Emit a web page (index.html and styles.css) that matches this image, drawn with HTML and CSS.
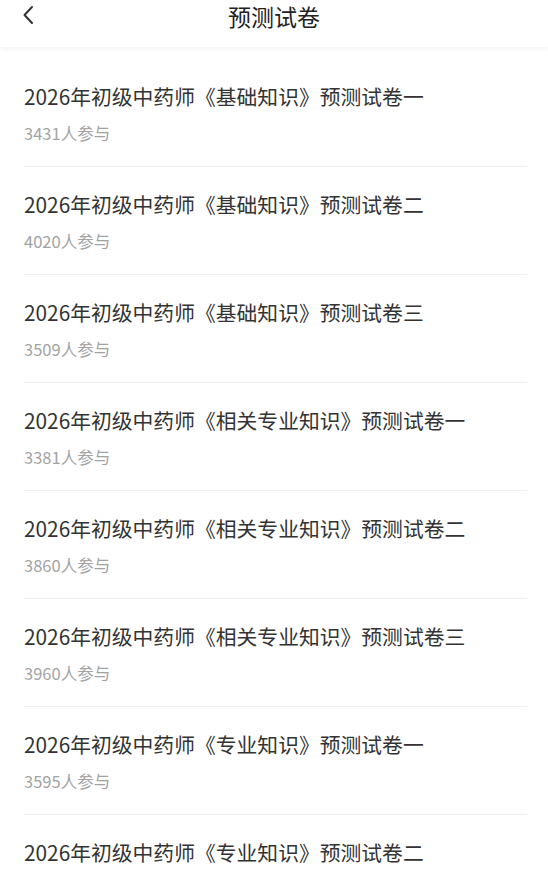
FILE: index.html
```html
<!DOCTYPE html>
<html lang="zh-CN">
<head>
<meta charset="utf-8">
<title>预测试卷</title>
<link rel="stylesheet" href="styles.css">
</head>
<body>
<header class="topbar">
  <span class="back" aria-label="返回">
    <svg width="12" height="20" viewBox="0 0 12 20"><path d="M10 2 L2.5 10 L10 18" fill="none" stroke="#333" stroke-width="2" stroke-linecap="round" stroke-linejoin="round"/></svg>
  </span>
  <h1 class="title">预测试卷</h1>
</header>
<ul class="list">
  <li class="item"><div class="name">2026年初级中药师《基础知识》预测试卷一</div><div class="meta">3431人参与</div></li>
  <li class="item"><div class="name">2026年初级中药师《基础知识》预测试卷二</div><div class="meta">4020人参与</div></li>
  <li class="item"><div class="name">2026年初级中药师《基础知识》预测试卷三</div><div class="meta">3509人参与</div></li>
  <li class="item"><div class="name">2026年初级中药师《相关专业知识》预测试卷一</div><div class="meta">3381人参与</div></li>
  <li class="item"><div class="name">2026年初级中药师《相关专业知识》预测试卷二</div><div class="meta">3860人参与</div></li>
  <li class="item"><div class="name">2026年初级中药师《相关专业知识》预测试卷三</div><div class="meta">3960人参与</div></li>
  <li class="item"><div class="name">2026年初级中药师《专业知识》预测试卷一</div><div class="meta">3595人参与</div></li>
  <li class="item"><div class="name">2026年初级中药师《专业知识》预测试卷二</div></li>
</ul>
</body>
</html>
```
FILE: styles.css
```css
* { box-sizing: border-box; }
html, body {
  margin: 0;
  padding: 0;
  background: #fff;
  font-family: "Noto Sans CJK SC", "Noto Sans", sans-serif;
}
body { overflow: hidden; height: 870px; }
.topbar {
  position: relative;
  height: 47px;
  padding-top: 1px;
  background: #fff;
  display: flex;
  justify-content: center;
  align-items: flex-start;
  box-shadow: 0 2px 6px rgba(0, 0, 0, 0.05);
  z-index: 1;
}
.back {
  position: absolute;
  left: 22px;
  top: 5px;
  display: flex;
}
.title {
  margin: 0;
  font-size: 23px;
  font-weight: 400;
  line-height: 30px;
  color: #222;
}
.list {
  list-style: none;
  margin: 0;
  padding: 12px 21px 0 24px;
}
.item {
  padding: 23px 0 22px;
  border-bottom: 1px solid #f0f0f0;
}
.name {
  font-size: 20.8px;
  line-height: 28px;
  color: #333;
  white-space: nowrap;
}
.meta {
  margin-top: 12px;
  font-size: 16.5px;
  line-height: 22px;
  color: #a3a3a3;
}
```
